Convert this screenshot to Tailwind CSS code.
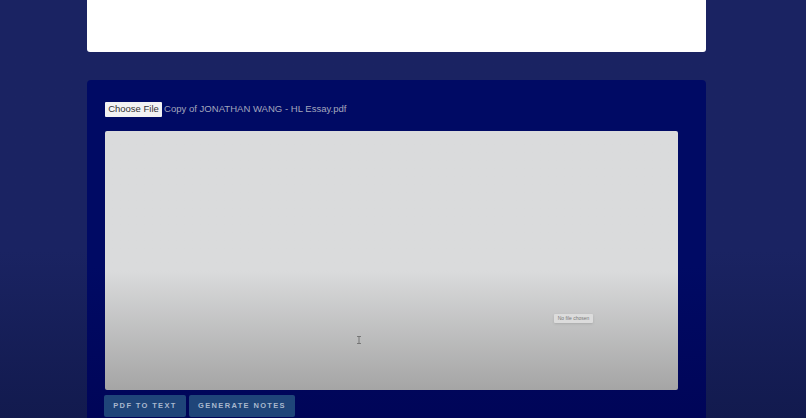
<!DOCTYPE html>
<html lang="en">
<head>
    <meta charset="UTF-8">
    <title>PDF Notes</title>
    <script src="https://cdn.jsdelivr.net/npm/@tailwindcss/browser@4"></script>
</head>
<body class="h-[418px] overflow-hidden bg-gradient-to-b from-[#1a2362] from-[60%] to-[#121a4e] font-['Liberation_Sans',Arial,sans-serif]">
    <main class="ml-[87px] w-[619px]">
        <!-- Top card -->
        <div class="h-[52px] rounded-b-[3px] bg-white"></div>

        <!-- Upload panel -->
        <section class="mt-[28px] h-[338px] rounded-t-[4px] bg-gradient-to-b from-[#000a64] from-[55%] to-[#000558] pl-[18px] pr-[28px] pt-[22px]">
            <div class="flex h-[15px] items-center gap-[2px]">
                <span class="flex h-[15px] w-[57px] items-center justify-center whitespace-nowrap rounded-[1px] bg-[#f2f2f3] text-[9.5px] text-[#333]">Choose File</span>
                <span class="whitespace-nowrap text-[9.55px] text-[#a3a6bd]">Copy of JONATHAN WANG - HL Essay.pdf</span>
            </div>

            <div class="relative mt-[14px] h-[259px] rounded-[2px] bg-gradient-to-b from-[#dadbdc] from-[54%] to-[#a5a5a5]">
                <span class="absolute left-[449px] top-[183px] flex h-[9px] w-[39px] items-center justify-center whitespace-nowrap rounded-[1px] bg-[#dcdcdc] text-[5px] text-[#777] shadow-sm">No file chosen</span>
                <svg class="absolute left-[251px] top-[205px]" width="6" height="8" viewBox="0 0 6 8" fill="none" stroke="#666" stroke-width="0.8">
                    <path d="M1 .5h4M3 .5v7M1 7.5h4"/>
                </svg>
            </div>

            <div class="-ml-px mt-[5px] flex gap-[3px]">
                <button class="h-[22px] w-[82px] rounded-[2px] bg-[#1f4579] text-center text-[7.5px] font-bold tracking-[0.18em] text-[#a9b8ce]">PDF TO TEXT</button>
                <button class="h-[22px] w-[106px] rounded-[2px] bg-[#1f4579] text-center text-[7.5px] font-bold tracking-[0.18em] text-[#a9b8ce]">GENERATE NOTES</button>
            </div>
        </section>
    </main>
</body>
</html>
